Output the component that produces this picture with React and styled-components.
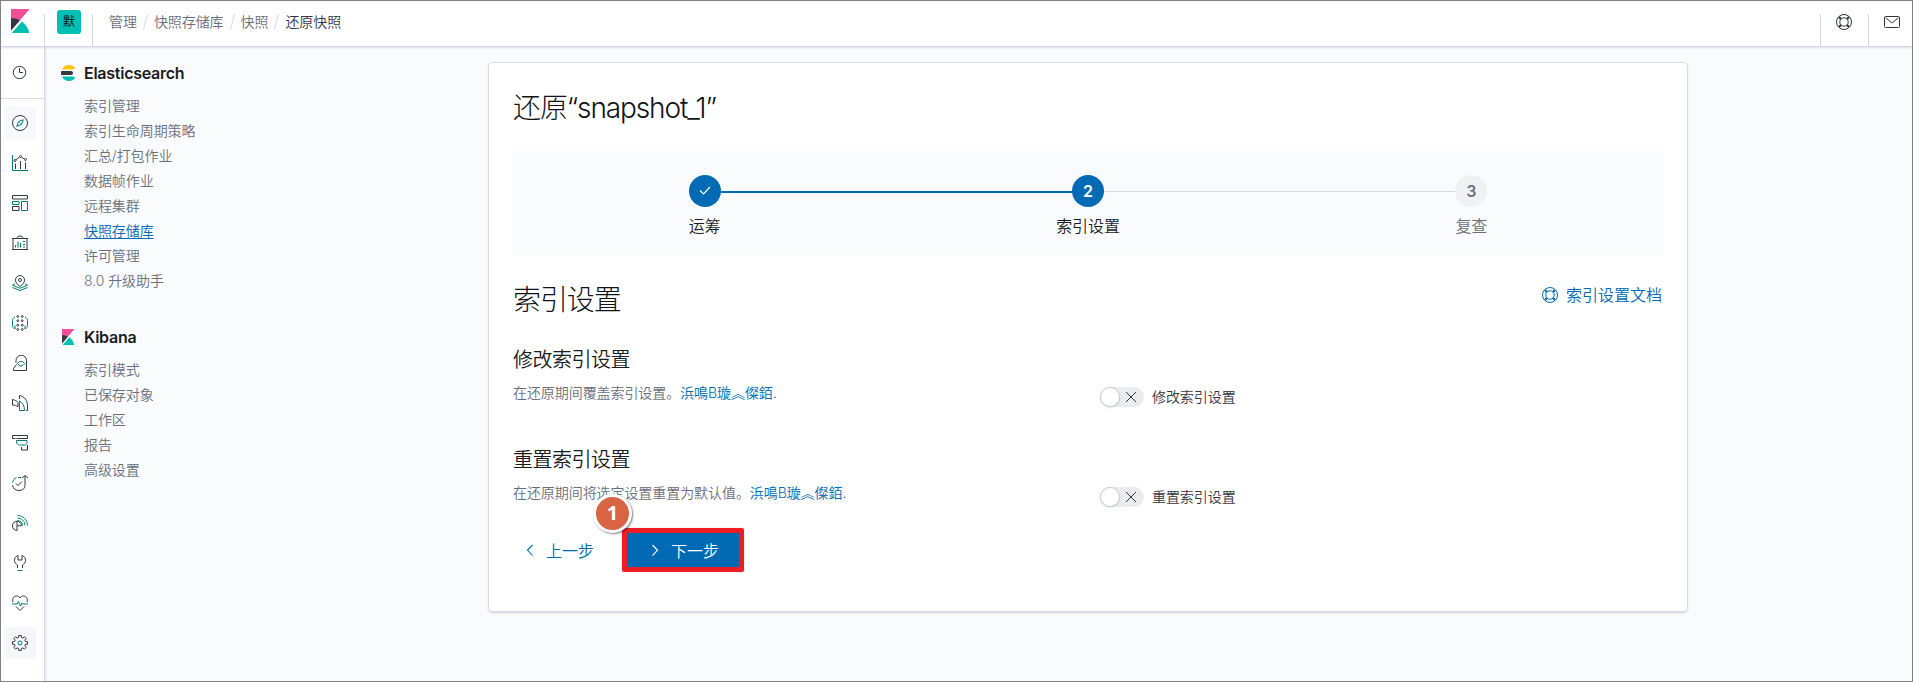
import React from "react";
import styled, { createGlobalStyle } from "styled-components";

const Global = createGlobalStyle`
  * { box-sizing: border-box; }
  html, body, #root { height: 100%; }
  body {
    margin: 0;
    overflow: hidden;
    background: #fafbfd;
    color: #343741;
    font-family: Inter, "Noto Sans CJK SC", sans-serif;
    font-weight: 350;
    font-size: 14px;
    letter-spacing: -0.005em;
  }
  svg { display: block; flex: none; }
`;

const INK = "#343741";
const TEXT = "#1a1c21";
const MUTED = "#69707d";
const TEAL = "#017d73";
const BLUE = "#006bb4";
const LINE = "#d3dae6";

const Page = styled.div`
  height: 682px;
  border: 1px solid #808080;
  display: flex;
  flex-direction: column;
`;

const Header = styled.header`
  position: relative;
  z-index: 2;
  height: 46px;
  flex: none;
  display: flex;
  align-items: flex-start;
  background: #fff;
  border-bottom: 1px solid ${LINE};
  box-shadow: 0 2px 2px -1px rgba(152, 162, 179, 0.35);
`;

const HeaderCell = styled.div`
  width: ${(p) => p.$width}px;
  height: 45px;
  padding: ${(p) => p.$pad};
`;

const Separator = styled.div`
  width: 1px;
  height: 32px;
  margin-top: 13px;
  background: ${LINE};
`;

const Space = styled.div`
  width: 24px;
  height: 24px;
  border-radius: 3px;
  background: #00bfb3;
  color: #000;
  font-size: 12px;
  line-height: 23px;
  text-align: center;
`;

const Crumbs = styled.nav`
  display: flex;
  flex: 1;
  align-items: center;
  height: 42px;
  padding-left: 16px;
  color: ${MUTED};
  line-height: 20px;
`;

const Slash = styled.span`
  width: 1px;
  height: 16px;
  margin: 0 8px;
  background: ${LINE};
  transform: rotate(15deg);
`;

const Current = styled.span`
  color: ${INK};
`;

const Body = styled.div`
  flex: 1;
  min-height: 0;
  display: flex;
`;

const Rail = styled.nav`
  width: 44px;
  flex: none;
  background: #fff;
  border-right: 1px solid ${LINE};
  box-shadow: 1px 0 2px rgba(152, 162, 179, 0.25);
`;

const Recent = styled.div`
  height: 52px;
  padding: 17px 0 0 10px;
  border-bottom: 1px solid ${LINE};
`;

const RailList = styled.div`
  display: flex;
  flex-direction: column;
  gap: 8px;
  padding: 8px 0 0 3px;
`;

const RailItem = styled.a`
  width: 32px;
  height: 32px;
  padding: 8px;
  border-radius: 4px;
  background: ${(p) => p.$bg || "transparent"};
`;

const SideNav = styled.aside`
  width: 443px;
  flex: none;
  padding: 14px 0 0 15px;
`;

const NavSection = styled.section`
  margin-bottom: 32px;
`;

const NavTitle = styled.h2`
  display: flex;
  align-items: center;
  gap: 8px;
  height: 24px;
  margin: 0 0 8px;
  color: ${TEXT};
  font-size: 16px;
  font-weight: 600;
  letter-spacing: -0.016em;
`;

const NavLink = styled.a`
  display: block;
  width: max-content;
  height: 25px;
  margin-left: 24px;
  line-height: 25px;
  color: ${(p) => (p.$active ? BLUE : MUTED)};
  text-decoration: ${(p) => (p.$active ? "underline" : "none")};
  text-underline-offset: 2px;
`;

const Panel = styled.main`
  width: 1200px;
  height: 550px;
  margin-top: 15px;
  padding: 24px;
  background: #fff;
  border: 1px solid ${LINE};
  border-radius: 4px;
  box-shadow: 0 2px 2px -1px rgba(152, 162, 179, 0.3), 0 1px 5px -2px rgba(152, 162, 179, 0.3);
`;

const Title = styled.h1`
  height: 40px;
  margin: 0;
  color: #111318;
  font-size: 28px;
  font-weight: 300;
  line-height: 42px;
  letter-spacing: -0.04em;
`;

const Steps = styled.div`
  display: grid;
  grid-template-columns: repeat(3, 1fr);
  height: 104px;
  margin: 24px 0;
  padding-top: 24px;
  background: #fafbfd;
`;

const Step = styled.div`
  text-align: center;
  font-size: 16px;
  line-height: 24px;
  color: ${(p) => (p.$state === "todo" ? MUTED : TEXT)};
`;

const Track = styled.div`
  display: flex;
  align-items: center;
  height: 32px;
  margin-bottom: 7px;
`;

const Bar = styled.span`
  flex: 1;
  height: ${(p) => (p.$kind === "done" ? 2 : 1)}px;
  margin-top: ${(p) => (p.$kind === "done" ? 2 : 1)}px;
  background: ${(p) => ({ done: BLUE, todo: LINE, none: "transparent" })[p.$kind]};
`;

const Dot = styled.span`
  display: flex;
  align-items: center;
  justify-content: center;
  width: 32px;
  height: 32px;
  border-radius: 50%;
  font-weight: 600;
  color: ${(p) => (p.$state === "todo" ? MUTED : "#fff")};
  background: ${(p) => (p.$state === "todo" ? "#f0f1f3" : BLUE)};
`;

const SectionHead = styled.div`
  display: flex;
  justify-content: space-between;
  height: 40px;
  margin-bottom: 24px;
`;

const DocLink = styled.a`
  display: flex;
  align-items: center;
  gap: 8px;
  height: 32px;
  padding-right: 1px;
  color: ${BLUE};
  font-size: 16px;
  letter-spacing: 0;
`;

const DocLabel = styled.span`
  padding-bottom: 2px;
`;

const SettingRow = styled.section`
  display: flex;
  height: 100px;
`;

const SettingText = styled.div`
  width: 587px;
`;

const SettingTitle = styled.h3`
  height: 32px;
  margin: 0 0 6px;
  color: ${TEXT};
  font-size: 20px;
  font-weight: 350;
  line-height: 34px;
  letter-spacing: -0.025em;
`;

const Description = styled.p`
  margin: 0;
  line-height: 24px;
  color: ${MUTED};
`;

const Link = styled.a`
  color: ${BLUE};
`;

const SwitchRow = styled.label`
  display: flex;
  align-items: center;
  gap: 8px;
  height: 20px;
  margin-top: 44px;
`;

const SwitchLabel = styled.span`
  padding-bottom: 2px;
`;

const SwitchBody = styled.span`
  display: flex;
  align-items: center;
  width: 44px;
  height: 20px;
  border-radius: 10px;
  background: #ebecf0;
`;

const Thumb = styled.span`
  width: 20px;
  height: 20px;
  margin-right: 3px;
  border: 1px solid #c9cbcd;
  border-radius: 50%;
  background: #fff;
  box-shadow: 0 1px 2px rgba(152, 162, 179, 0.3);
`;

const Actions = styled.div`
  display: flex;
  align-items: center;
  height: 40px;
  margin-top: -13px;
  font-size: 16px;
  letter-spacing: 0;
`;

const BackButton = styled.a`
  display: flex;
  align-items: center;
  gap: 8px;
  width: 114px;
  padding-left: 9px;
  color: ${BLUE};
`;

const NextButton = styled.a`
  position: relative;
  display: flex;
  align-items: center;
  justify-content: center;
  gap: 8px;
  width: 112px;
  height: 40px;
  background: ${BLUE};
  color: #fff;
`;

const Frame = styled.span`
  position: absolute;
  inset: -2px -5px -2px -5px;
  border: 5px solid #ee1c25;
  border-radius: 2px;
  box-shadow: 0 0 1px rgba(120, 0, 0, 0.5);
`;

const Marker = styled.span`
  position: absolute;
  left: -34px;
  top: -36px;
  width: 39px;
  height: 39px;
  border: 3px solid #fff;
  border-radius: 50%;
  background: #d96444;
  box-shadow: 1px 1px 2px rgba(0, 0, 0, 0.5);
  font: 700 20px/32px "Open Sans", sans-serif;
  text-align: center;
`;

function Icon({ size = 16, box = 32, stroke = INK, weight = 2, children }) {
  return (
    <svg width={size} height={size} viewBox={`0 0 ${box} ${box}`} fill="none" stroke={stroke} strokeWidth={weight}>
      {children}
    </svg>
  );
}

const KibanaLogo = ({ size }) => (
  <svg width={size} height={size} viewBox="0 0 32 32">
    <path fill="#F04E98" d="M4 0v28.789L28.935.017z" />
    <path fill="#343741" d="M4 12v16.789l11.906-13.738A24.721 24.721 0 0 0 4 12" />
    <path fill="#00BFB3" d="M18.479 16.664 6.268 30.754l-1.073 1.237h23.191c-1.252-6.292-4.883-11.719-9.908-15.327" />
  </svg>
);

const ElasticLogo = () => (
  <svg width="16" height="16" viewBox="0 0 32 32">
    <path fill="#343741" d="M2 16c0 1.384.194 2.72.524 4H22a4 4 0 0 0 0-8H2.524A15.984 15.984 0 0 0 2 16" />
    <path fill="#FEC514" d="M28.924 7.662A15.381 15.381 0 0 0 30.48 6C27.547 2.346 23.05 0 18 0 11.679 0 6.239 3.678 3.644 9H25.51a5.039 5.039 0 0 0 3.413-1.338" />
    <path fill="#00BFB3" d="M25.51 23H3.645C6.24 28.323 11.679 32 18 32c5.05 0 9.547-2.346 12.48-6a15.381 15.381 0 0 0-1.556-1.662A5.034 5.034 0 0 0 25.51 23" />
  </svg>
);

const HelpIcon = ({ color }) => (
  <Icon box={16} weight={1} stroke={color}>
    <circle cx="8" cy="8" r="7.500" />
    <circle cx="8" cy="8" r="4.200" />
    <path
      strokeWidth="2.200"
      d="m3 3 1.900 1.900M13 3l-1.900 1.900M3 13l1.900-1.900M13 13l-1.900-1.900"
    />
  </Icon>
);

const gearPath = (() => {
  const pts = [];
  for (let i = 0; i < 8; i++) {
    const mid = (i * Math.PI) / 4;
    [[-0.24, 11.3], [-0.17, 15.2], [0.17, 15.2], [0.24, 11.3]].forEach(([d, r]) => {
      pts.push(`${(16 + r * Math.sin(mid + d)).toFixed(2)} ${(16 - r * Math.cos(mid + d)).toFixed(2)}`);
    });
  }
  return `M${pts.join("L")}Z`;
})();

const railIcons = [
  <>
    <circle cx="16" cy="16" r="15" />
    <path stroke={TEAL} d="m22.500 9.500-3.500 9.500-9.500 3.500 3.500-9.500zM15 15l2 2" />
  </>,
  <>
    <path stroke={TEAL} d="M1 0v31h31" />
    <path d="M7 28V17M17 28V12M27 28V15M8 9.500l6.500-5M19 4.500l6 3.500" />
    <circle cx="6" cy="11" r="2" />
    <circle cx="17" cy="3" r="2" />
    <circle cx="27" cy="9" r="2" />
  </>,
  <>
    <path d="M1 1h30v7H1zM1 23h13v8H1z" />
    <path stroke={TEAL} d="M1 13h13v6H1zM19 13h12v18H19z" />
  </>,
  <>
    <path d="M0 7h32M2 7v22M30 7v22M0 29h32M9 7c1-3 4-5 7-5s6 2 7 5" />
    <path stroke={TEAL} strokeWidth="2.200" d="M7 25v-5M12 25V13M17 25v-9M22 13h4M22 19h4M22 24h4" />
  </>,
  <>
    <path d="M16 23C10.500 19 7 15 7 10a9 9 0 0 1 18 0C25 15 21.500 19 16 23z" />
    <circle cx="16" cy="10" r="3" />
    <path stroke={TEAL} d="M6 18l-5 2.500 15 6 15-6-5-2.500M1 25l15 6 15-6" />
  </>,
  <>
    {[3, 11.5, 20.5, 29].map((y) => (
      <React.Fragment key={y}>
        <circle cx="11.500" cy={y} r="1.900" />
        <circle cx="20.500" cy={y} r="1.900" />
      </React.Fragment>
    ))}
    <path stroke={TEAL} d="M6 4C3 5 1 8 1 11v10c0 3 2 6 5 7v-7M26 4c3 1 5 4 5 7v10c0 3-2 6-5 7v-7" />
  </>,
  <>
    <path d="M8 15.500V11a10.500 10.500 0 0 1 21 0v20H3v-4l6-8" />
    <path stroke={TEAL} d="M11 17l4-4h6l4 4c-2 3-4 5-7 5s-5-2-7-5z" />
  </>,
  <>
    <path d="M15 1c10 2 16 10 16 20v10h-3M15 1v7M1 9c5 1 9 3 11 6v9C9 21 5 20 1 20z" />
    <path stroke={TEAL} d="M15 12c6 3 10 9 10 19H15z" />
  </>,
  <>
    <path d="M1 1h30v6H9M1 1v6h6M31 20v10H19v-6" />
    <path stroke={TEAL} d="M9 11h21v4c0 3-2 5-5 5H15c-3 0-6-3-6-6z" />
  </>,
  <>
    <path d="M26 2v19c0 6-5 10-12 10C7 31 2 27 1 20M20 6l6-5 6 5M8 17l4 4 8-8" />
    <path stroke={TEAL} d="M1 15c1-5 4-8 8-10M12 5h6" />
  </>,
  <>
    <path d="M10 12.500A9.200 9.200 0 0 0 10 31zM10 12.500c5 0 9 4 9 9h-9" />
    <path stroke={TEAL} d="M11 1c11 0 20 9 20 20M11 6c8 0 15 7 15 15M11 11c6 0 10 4 10 10" />
  </>,
  <>
    <path d="M12 1C8 2 5 6 5 11c0 4 3 7 6 9v6M20 1c4 1 7 5 7 10 0 4-3 7-6 9v6M12 1v9h8V1" />
    <path stroke={TEAL} d="M11 31h10" />
  </>,
  <>
    <path d="M2 14C0 8 3 2 9 2c3 0 6 1 7 4 1-3 4-4 7-4 6 0 9 6 7 12M8 23l8 8 8-8" />
    <path stroke={TEAL} d="M0 18h10l3-5 4 9 3-6 2 2h10" />
  </>,
  <>
    <path d={gearPath} />
    <circle stroke={TEAL} cx="16" cy="16" r="4" />
  </>,
];

const railBackground = { 0: "#f7f8fc", 13: "#f5f7fa" };

const navigation = [
  {
    title: "Elasticsearch",
    logo: <ElasticLogo />,
    items: ["索引管理", "索引生命周期策略", "汇总/打包作业", "数据帧作业", "远程集群", "快照存储库", "许可管理", "8.0 升级助手"],
  },
  {
    title: "Kibana",
    logo: <KibanaLogo size={16} />,
    items: ["索引模式", "已保存对象", "工作区", "报告", "高级设置"],
  },
];

const steps = [
  { label: "运筹", state: "done", before: "none", after: "done" },
  { label: "索引设置", state: "current", before: "done", after: "todo" },
  { label: "复查", state: "todo", before: "todo", after: "none" },
];

const settings = [
  { title: "修改索引设置", text: "在还原期间覆盖索引设置。" },
  { title: "重置索引设置", text: "在还原期间将选定设置重置为默认值。" },
];

export default function App() {
  return (
    <Page>
      <Global />
      <Header>
        <HeaderCell $width={43} $pad="8px 0 0 7px">
          <KibanaLogo size={24} />
        </HeaderCell>
        <Separator />
        <HeaderCell $width={47} $pad="9px 0 0 12px">
          <Space>默</Space>
        </HeaderCell>
        <Separator />
        <Crumbs>
          管理
          <Slash />
          快照存储库
          <Slash />
          快照
          <Slash />
          <Current>还原快照</Current>
        </Crumbs>
        <Separator />
        <HeaderCell $width={47} $pad="13px 0 0 15px">
          <HelpIcon color={INK} />
        </HeaderCell>
        <Separator />
        <HeaderCell $width={43} $pad="13px 0 0 15px">
          <Icon box={16} weight={1}>
            <rect x=".5" y="2.500" width="15" height="11" rx="1" />
            <path d="m1.500 3.500 5.700 5c.5.400 1.100.400 1.600 0l5.700-5" />
          </Icon>
        </HeaderCell>
      </Header>
      <Body>
        <Rail>
          <Recent>
            <Icon box={16} weight={1}>
              <circle cx="8.500" cy="8.500" r="6.200" />
              <path d="M8.500 4v4.500H12" />
            </Icon>
          </Recent>
          <RailList>
            {railIcons.map((shape, i) => (
              <RailItem key={i} $bg={railBackground[i]}>
                <Icon weight={2}>{shape}</Icon>
              </RailItem>
            ))}
          </RailList>
        </Rail>
        <SideNav>
          {navigation.map((group) => (
            <NavSection key={group.title}>
              <NavTitle>
                {group.logo}
                {group.title}
              </NavTitle>
              {group.items.map((item) => (
                <NavLink key={item} $active={item === "快照存储库"}>
                  {item}
                </NavLink>
              ))}
            </NavSection>
          ))}
        </SideNav>
        <Panel>
          <Title>还原“snapshot_1”</Title>
          <Steps>
            {steps.map((step, i) => (
              <Step key={step.label} $state={step.state}>
                <Track>
                  <Bar $kind={step.before} />
                  <Dot $state={step.state}>
                    {step.state === "done" ? (
                      <Icon box={16} weight={1.200} stroke="#fff">
                        <path d="m3 7.500 3.500 3.500L13 4" />
                      </Icon>
                    ) : (
                      i + 1
                    )}
                  </Dot>
                  <Bar $kind={step.after} />
                </Track>
                {step.label}
              </Step>
            ))}
          </Steps>
          <SectionHead>
            <Title as="h2">索引设置</Title>
            <DocLink>
              <HelpIcon color={BLUE} />
              <DocLabel>索引设置文档</DocLabel>
            </DocLink>
          </SectionHead>
          {settings.map((setting) => (
            <SettingRow key={setting.title}>
              <SettingText>
                <SettingTitle>{setting.title}</SettingTitle>
                <Description>
                  {setting.text}
                  <Link>浜鳴B璇︽儏銆.</Link>
                </Description>
              </SettingText>
              <SwitchRow>
                <SwitchBody>
                  <Thumb />
                  <Icon box={16} weight={1}>
                    <path d="m3 3 10 10M13 3 3 13" />
                  </Icon>
                </SwitchBody>
                <SwitchLabel>{setting.title}</SwitchLabel>
              </SwitchRow>
            </SettingRow>
          ))}
          <Actions>
            <BackButton>
              <Icon box={16} weight={1.100} stroke={BLUE}>
                <path d="M10.500 3 5.500 8l5 5.500" />
              </Icon>
              上一步
            </BackButton>
            <NextButton>
              <Icon box={16} weight={1.100} stroke="#fff">
                <path d="m5.500 3 5 5.300-5 5.200" />
              </Icon>
              下一步
              <Frame />
              <Marker>1</Marker>
            </NextButton>
          </Actions>
        </Panel>
      </Body>
    </Page>
  );
}
